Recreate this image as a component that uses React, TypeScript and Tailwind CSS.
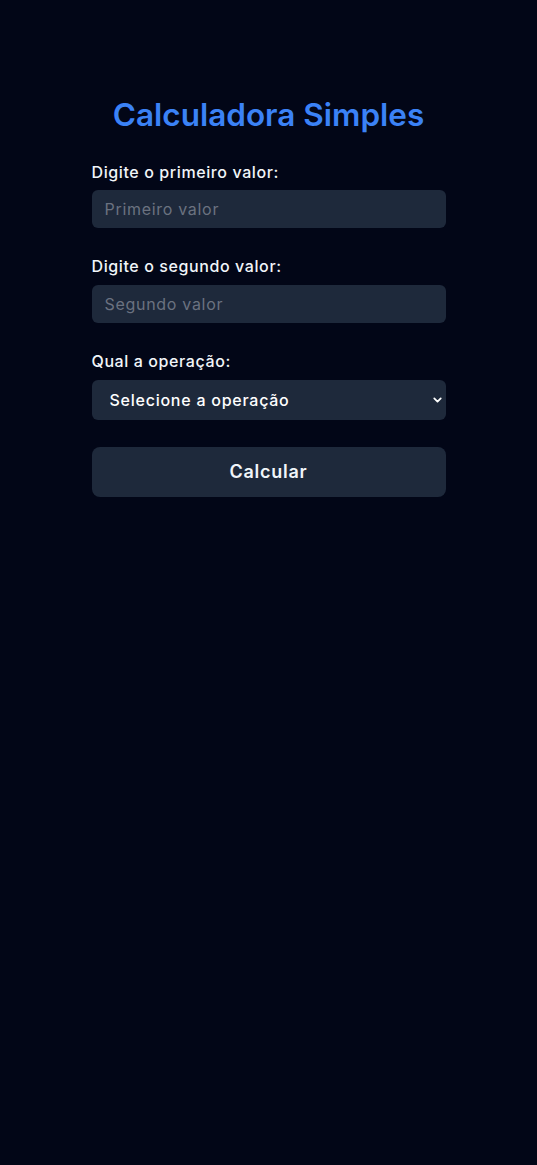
import React, { useState } from 'react';
import { ChevronDown } from 'lucide-react';

export default function App() {
  const [a, setA] = useState('');
  const [b, setB] = useState('');
  const [op, setOp] = useState('');

  return (
    <div
      className="min-h-[1165px] bg-[#020617] text-white"
      style={{ fontFamily: 'Inter, "Noto Sans", sans-serif' }}
    >
      <div className="mx-auto w-[354px] pt-[97px]">
        <h1 className="text-center text-[31.5px] leading-9 font-semibold text-[#3b82f6]">
          Calculadora Simples
        </h1>

        <div className="mt-[27px] flex flex-col">
          <label className="text-base leading-6 font-medium tracking-[0.6px] text-[#f1f5f9]">
            Digite o primeiro valor:
          </label>
          <input
            value={a}
            onChange={(e) => setA(e.target.value)}
            placeholder="Primeiro valor"
            className="mt-[6px] h-[38px] rounded-md bg-[#1e293b] px-[13px] text-base tracking-[0.7px] text-white placeholder-[#6b7280] outline-none"
          />

          <label className="mt-[26px] text-base leading-6 font-medium tracking-[0.6px] text-[#f1f5f9]">
            Digite o segundo valor:
          </label>
          <input
            value={b}
            onChange={(e) => setB(e.target.value)}
            placeholder="Segundo valor"
            className="mt-[7px] h-[38px] rounded-md bg-[#1e293b] px-[13px] text-base tracking-[0.7px] text-white placeholder-[#6b7280] outline-none"
          />

          <label className="mt-[26px] text-base leading-6 font-medium tracking-[0.6px] text-[#f1f5f9]">
            Qual a operação:
          </label>
          <div className="relative mt-[7px]">
            <select
              value={op}
              onChange={(e) => setOp(e.target.value)}
              className="h-[40px] w-full appearance-none rounded-md bg-[#1e293b] pl-[18px] pr-8 text-base font-medium tracking-[0.75px] text-white outline-none"
            >
              <option value="">Selecione a operação</option>
              <option value="+">Soma</option>
              <option value="-">Subtração</option>
              <option value="*">Multiplicação</option>
              <option value="/">Divisão</option>
            </select>
            <ChevronDown
              className="pointer-events-none absolute right-[2px] top-1/2 h-[13px] w-[13px] -translate-y-1/2 text-white"
              strokeWidth={3.2}
            />
          </div>

          <button className="mt-[27px] h-[50px] rounded-lg bg-[#1e293b] text-lg font-semibold tracking-[0.75px] text-[#f1f5f9]">
            Calcular
          </button>
        </div>
      </div>
    </div>
  );
}
